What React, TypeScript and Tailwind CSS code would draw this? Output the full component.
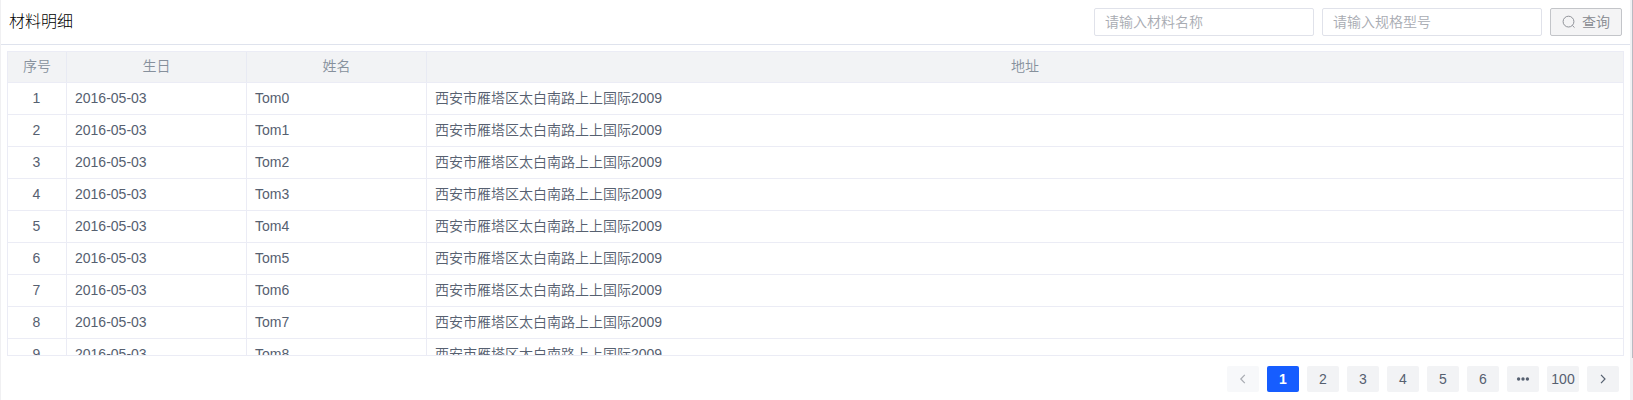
import React from 'react';

const rows = Array.from({ length: 9 }, (_, i) => ({
  date: '2016-05-03',
  name: `Tom${i}`,
  address: '西安市雁塔区太白南路上上国际2009',
}));

const grid = 'grid grid-cols-[59px_180px_180px_1fr]';

function SearchInput({ placeholder }: { placeholder: string }) {
  return (
    <input
      placeholder={placeholder}
      className="h-7 w-[220px] rounded-[2px] border border-[#e0e2ea] bg-white px-2.5 text-sm font-[350] outline-none placeholder:text-[#a8abb2]"
    />
  );
}

function SearchIcon() {
  return (
    <svg className="size-3.5" viewBox="0 0 14 14" fill="none" stroke="currentColor" strokeWidth="0.9">
      <circle cx="6.5" cy="6.6" r="5.4" />
      <path d="m10.4 10.5 2.1 2.1" />
    </svg>
  );
}

function Chevron({ left }: { left?: boolean }) {
  return (
    <svg className="size-3" viewBox="0 0 12 12" fill="none" stroke="currentColor" strokeWidth="1.2">
      <path d={left ? 'M7.8 1.8 3.8 6 7.8 10.2' : 'M4 1.8 8 6 4 10.2'} />
    </svg>
  );
}

function Dots() {
  return (
    <svg className="h-3 w-3.5" viewBox="0 0 14 12" fill="currentColor">
      <circle cx="2.6" cy="6" r="1.7" />
      <circle cx="7" cy="6" r="1.7" />
      <circle cx="11.4" cy="6" r="1.7" />
    </svg>
  );
}

function PageButton({ children, active, disabled }: { children: React.ReactNode; active?: boolean; disabled?: boolean }) {
  const tone = active
    ? 'bg-[#165dff] font-bold text-white'
    : disabled
      ? 'bg-[#f7f8fa] text-[#a8abb2]'
      : 'bg-[#f2f3f5] text-[#566070]';
  return (
    <button className={`flex h-[26px] w-8 items-center justify-center rounded-[2px] text-sm ${tone}`}>{children}</button>
  );
}

export default function App() {
  return (
    <div className="flex h-[400px] w-full overflow-hidden bg-white font-['Liberation_Sans','Noto_Sans_CJK_SC',sans-serif] text-sm">
      <div className="flex min-w-0 flex-1 flex-col border-l border-[#f0f0f2]">
        <header className="flex h-[45px] shrink-0 items-center justify-between border-b border-[#dfe3ed] px-2">
          <h1 className="text-base font-light text-black">材料明细</h1>
          <div className="flex gap-2">
            <SearchInput placeholder="请输入材料名称" />
            <SearchInput placeholder="请输入规格型号" />
            <button className="flex h-7 w-[72px] items-center justify-center gap-1.5 rounded-[2px] border border-[#c3c5c9] bg-[#f4f4f5] font-[350] text-[#85888e]">
              <SearchIcon />
              查询
            </button>
          </div>
        </header>
        <div className="mt-1.5 mr-1.5 ml-1.5 h-[305px] shrink-0 overflow-hidden border border-[#ebecf5] text-[#566070]">
          <div className={`${grid} h-[31px] border-b border-[#ebecf5] bg-[#f2f3f5] font-[350] text-[#86909c]`}>
            {['序号', '生日', '姓名', '地址'].map((title) => (
              <div key={title} className="flex items-center justify-center border-r border-[#e8eaf3] pb-0.5 last:border-r-0">
                {title}
              </div>
            ))}
          </div>
          {rows.map((row, i) => (
            <div key={row.name} className={`${grid} h-8 border-b border-[#ebecf5]`}>
              <div className="flex items-center justify-center border-r border-[#ebecf5] pr-px pb-0.5">{i + 1}</div>
              <div className="flex items-center border-r border-[#ebecf5] px-2 pb-0.5">{row.date}</div>
              <div className="flex items-center border-r border-[#ebecf5] px-2 pb-0.5">{row.name}</div>
              <div className="flex items-center px-2 pb-0.5">
                <span className="font-[350]">{row.address}</span>
              </div>
            </div>
          ))}
        </div>
        <nav className="mt-2.5 mr-[11px] flex justify-end gap-2">
          <PageButton disabled>
            <Chevron left />
          </PageButton>
          <PageButton active>1</PageButton>
          {[2, 3, 4, 5, 6].map((page) => (
            <PageButton key={page}>{page}</PageButton>
          ))}
          <PageButton>
            <Dots />
          </PageButton>
          <PageButton>100</PageButton>
          <PageButton>
            <Chevron />
          </PageButton>
        </nav>
      </div>
      <div className="flex w-[3px] justify-end bg-[#f1f1f4]">
        <div className="h-[358px] w-px bg-[#b9bac2]" />
      </div>
    </div>
  );
}
